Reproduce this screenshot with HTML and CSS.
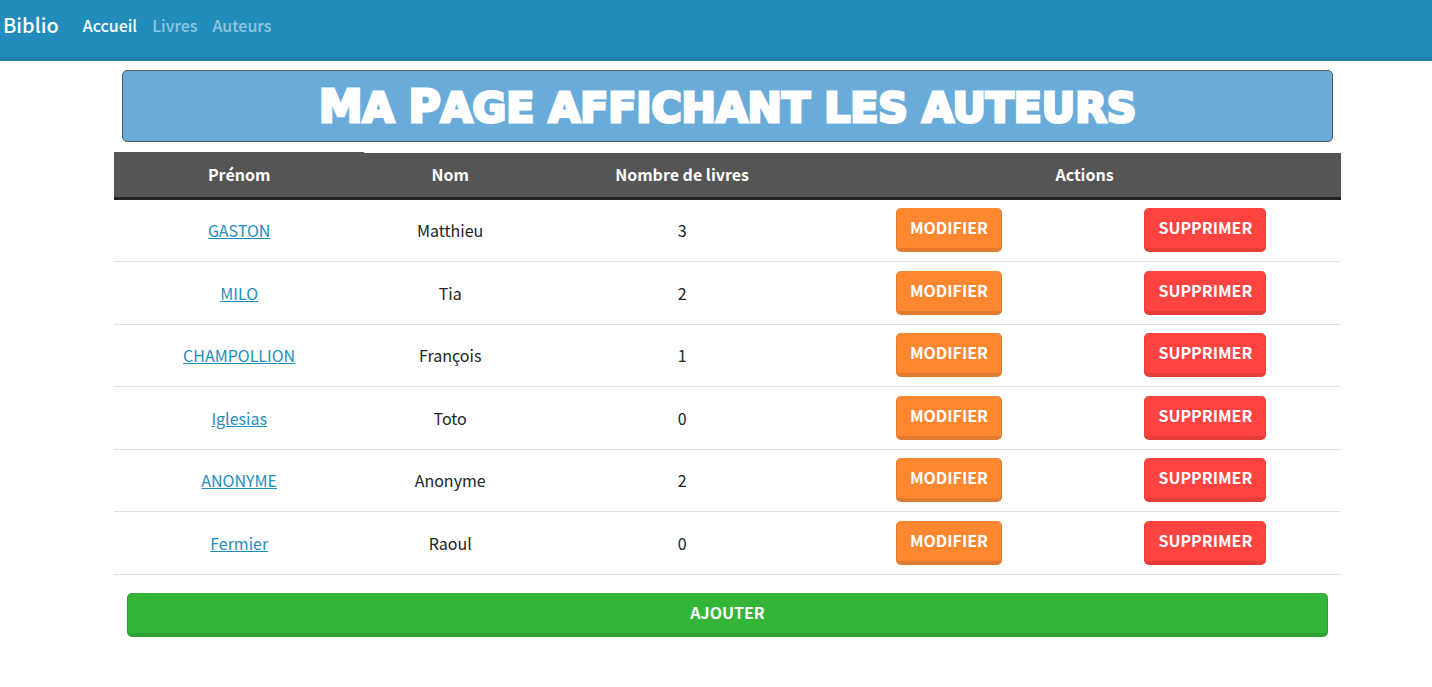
FILE: index.html
```html
<!DOCTYPE html>
<html lang="fr">
<head>
<meta charset="utf-8">
<meta name="viewport" content="width=device-width, initial-scale=1">
<title>Biblio</title>
<link rel="stylesheet" href="styles.css">
</head>
<body>
<nav class="navbar">
  <a class="brand" href="#">Biblio</a>
  <a class="nav-link active" href="#">Accueil</a>
  <a class="nav-link" href="#">Livres</a>
  <a class="nav-link" href="#">Auteurs</a>
</nav>
<main class="container">
  <h1 class="page-title"><span class="initial">M</span>a <span class="initial">P</span>age affichant les auteurs</h1>
  <table class="authors">
    <colgroup><col class="col-first"><col class="col-last"><col class="col-count"><col class="col-edit"><col class="col-delete"></colgroup>
    <thead>
      <tr><th scope="col">Prénom</th><th scope="col">Nom</th><th scope="col">Nombre de livres</th><th scope="colgroup" colspan="2">Actions</th></tr>
    </thead>
    <tbody>
      <tr><td><a href="#">GASTON</a></td><td>Matthieu</td><td>3</td><td><button class="btn edit">Modifier</button></td><td><button class="btn delete">Supprimer</button></td></tr>
      <tr><td><a href="#">MILO</a></td><td>Tia</td><td>2</td><td><button class="btn edit">Modifier</button></td><td><button class="btn delete">Supprimer</button></td></tr>
      <tr><td><a href="#">CHAMPOLLION</a></td><td>François</td><td>1</td><td><button class="btn edit">Modifier</button></td><td><button class="btn delete">Supprimer</button></td></tr>
      <tr><td><a href="#">Iglesias</a></td><td>Toto</td><td>0</td><td><button class="btn edit">Modifier</button></td><td><button class="btn delete">Supprimer</button></td></tr>
      <tr><td><a href="#">ANONYME</a></td><td>Anonyme</td><td>2</td><td><button class="btn edit">Modifier</button></td><td><button class="btn delete">Supprimer</button></td></tr>
      <tr><td><a href="#">Fermier</a></td><td>Raoul</td><td>0</td><td><button class="btn edit">Modifier</button></td><td><button class="btn delete">Supprimer</button></td></tr>
    </tbody>
  </table>
  <div class="add-row"><button class="btn add">Ajouter</button></div>
</main>
</body>
</html>
```
FILE: styles.css
```css
* { box-sizing: border-box; }

body {
  margin: 0;
  background: #fff;
  color: #222;
  font: 16px/24px "Noto Sans CJK SC", "Noto Sans", sans-serif;
}

.navbar {
  display: flex;
  align-items: flex-start;
  padding: 9px 3px 16px;
  background: #228dbb;
  border-bottom: 4px solid #1d7ea8;
  font-weight: 500;
  line-height: 32px;
}

.brand {
  margin-right: 24px;
  color: #fff;
  font-size: 20px;
  text-decoration: none;
}

.nav-link {
  margin-right: 15px;
  color: #90c6dd;
  text-decoration: none;
}

.nav-link.active { color: #fff; }

.container { padding: 9px 91px 0 114px; }

.page-title {
  margin: 0 8px 11px;
  padding: 11px 0 7px;
  border: 1px solid #555;
  border-radius: 5px;
  background: #6aacd9;
  color: #fff;
  font: 800 41px/52px "DejaVu Sans", sans-serif;
  text-align: center;
  text-transform: uppercase;
  -webkit-text-stroke: 3px #fff;
}

.initial {
  font-size: 44px;
  line-height: 1;
}

.authors {
  width: 100%;
  table-layout: fixed;
  border-spacing: 0;
  text-align: center;
}

.col-first { width: 20.4%; }
.col-last { width: 14%; }
.col-count { width: 23.8%; }
.col-edit { width: 19.7%; }
.col-delete { width: 22.1%; }

.authors th {
  padding: 9px 8px 11px;
  background: #555;
  border-bottom: 3px solid #222;
  color: #fff;
  font-weight: 700;
}

.authors th:first-child { box-shadow: 0 -1px #555; }

.authors td {
  padding: 8px 8px 9px;
  border-bottom: 1px solid #dee2e6;
  vertical-align: middle;
}

.authors tr:nth-child(even) td { padding-top: 9px; }

.authors a {
  color: #228dbb;
  text-decoration: underline;
}

.btn {
  display: block;
  margin: 0 auto;
  padding: 3px 13px 5px;
  border: 0 solid;
  border-width: 0 1px 4px;
  border-radius: 5px;
  color: #fff;
  font: 700 16px/32px "Noto Sans CJK SC", "Noto Sans", sans-serif;
  text-transform: uppercase;
}

.edit { background: #ff8730; border-color: #e17b2f; }
.delete { background: #ff4340; border-color: #e53e38; }
.add { width: 100%; background: #33b538; border-color: #2ea333; }

.add-row { padding: 18px 13px 50px; }
```
